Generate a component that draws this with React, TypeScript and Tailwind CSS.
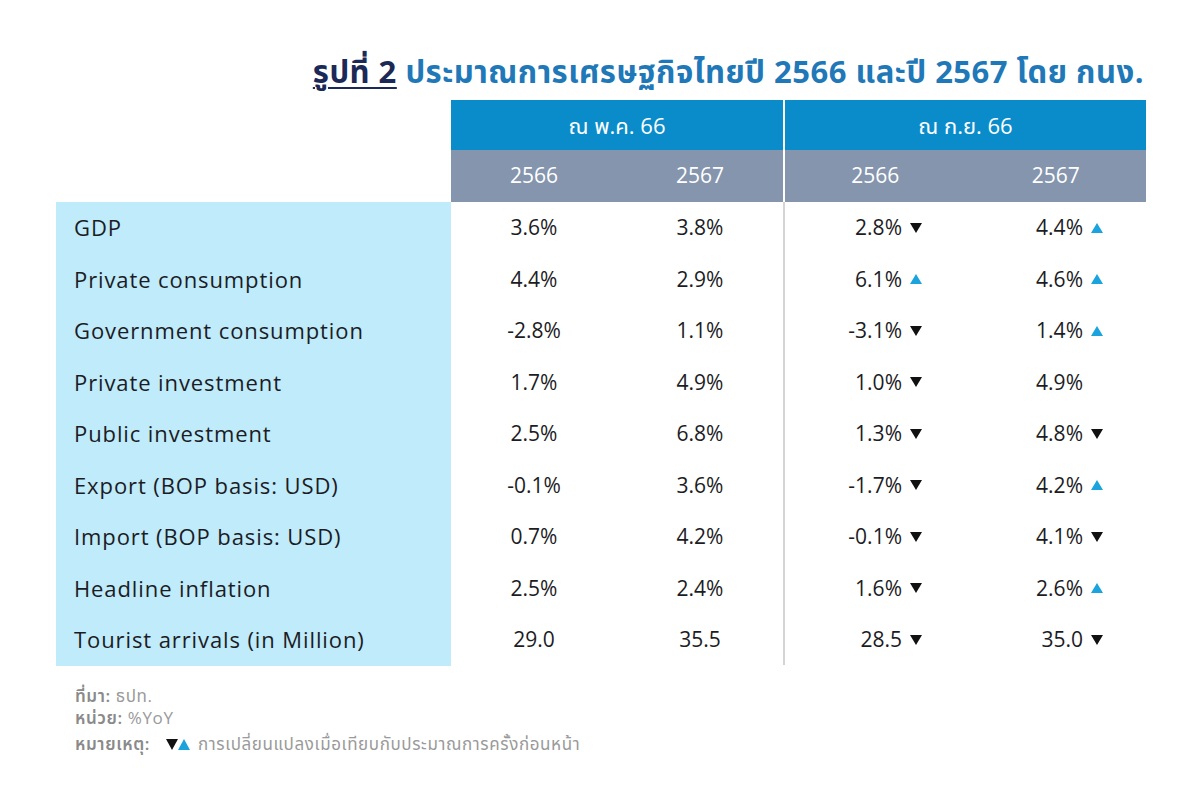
import React from "react";

type Trend = "up" | "down" | null;

interface Row {
  label: string;
  may: [string, string];
  sep: [string, Trend, string, Trend];
}

const rows: Row[] = [
  { label: "GDP", may: ["3.6%", "3.8%"], sep: ["2.8%", "down", "4.4%", "up"] },
  { label: "Private consumption", may: ["4.4%", "2.9%"], sep: ["6.1%", "up", "4.6%", "up"] },
  { label: "Government consumption", may: ["-2.8%", "1.1%"], sep: ["-3.1%", "down", "1.4%", "up"] },
  { label: "Private investment", may: ["1.7%", "4.9%"], sep: ["1.0%", "down", "4.9%", null] },
  { label: "Public investment", may: ["2.5%", "6.8%"], sep: ["1.3%", "down", "4.8%", "down"] },
  { label: "Export (BOP basis: USD)", may: ["-0.1%", "3.6%"], sep: ["-1.7%", "down", "4.2%", "up"] },
  { label: "Import (BOP basis: USD)", may: ["0.7%", "4.2%"], sep: ["-0.1%", "down", "4.1%", "down"] },
  { label: "Headline inflation", may: ["2.5%", "2.4%"], sep: ["1.6%", "down", "2.6%", "up"] },
  { label: "Tourist arrivals (in Million)", may: ["29.0", "35.5"], sep: ["28.5", "down", "35.0", "down"] },
];

const font = { fontFamily: '"Open Sans", "Noto Sans", "Noto Sans Thai", sans-serif' };

function Arrow({ trend }: { trend: Trend }) {
  if (!trend) return <span className="inline-block w-[14px]" />;
  return (
    <svg width="14" height="12" viewBox="0 0 14 12" className="inline-block">
      {trend === "up" ? (
        <polygon points="7,1 13,11 1,11" fill="#1aa3dd" />
      ) : (
        <polygon points="1,1 13,1 7,11" fill="#111111" />
      )}
    </svg>
  );
}

function SepCell({ value, trend }: { value: string; trend: Trend }) {
  return (
    <div className="flex items-center">
      <span className="w-[117px] text-right">{value}</span>
      <span className="ml-[7px] flex items-center">
        <Arrow trend={trend} />
      </span>
    </div>
  );
}

export default function App() {
  return (
    <div className="w-[1200px] h-[800px] bg-white text-[#1c1c24]" style={font}>
      <div className="flex justify-end pr-[56px] pt-[50px]">
        <h1 className="text-[31px] font-bold text-[#1f78b8] tracking-[0.5px] leading-[42px]">
          <span className="text-[#1b2957] underline decoration-2 underline-offset-4">รูปที่ 2</span>{" "}
          ประมาณการเศรษฐกิจไทยปี 2566 และปี 2567 โดย กนง.
        </h1>
      </div>

      <div className="ml-[56px] mt-[8px] flex">
        <div className="w-[395px]">
          <div className="h-[102px]" />
          <div className="bg-[#bfebfb] pl-[18px] text-[22px] tracking-[0.9px]">
            {rows.map((r) => (
              <div key={r.label} className="h-[51.5px] flex items-center">
                {r.label}
              </div>
            ))}
          </div>
        </div>

        <div className="w-[332px]">
          <div className="h-[50px] bg-[#0a8ccb] text-white text-[22px] flex items-center justify-center">
            ณ พ.ค. 66
          </div>
          <div className="h-[52px] bg-[#8595ad] text-white text-[21px] grid grid-cols-2 items-center text-center">
            <span>2566</span>
            <span>2567</span>
          </div>
          <div className="text-[21px]">
            {rows.map((r) => (
              <div key={r.label} className="h-[51.5px] grid grid-cols-2 items-center text-center">
                <span>{r.may[0]}</span>
                <span>{r.may[1]}</span>
              </div>
            ))}
          </div>
        </div>

        <div className="w-[2px] flex flex-col">
          <div className="h-[102px] bg-white" />
          <div className="h-[463px] w-[2px] bg-[#d4d4d4]" />
        </div>

        <div className="w-[361px]">
          <div className="h-[50px] bg-[#0a8ccb] text-white text-[22px] flex items-center justify-center">
            ณ ก.ย. 66
          </div>
          <div className="h-[52px] bg-[#8595ad] text-white text-[21px] grid grid-cols-2 items-center text-center">
            <span>2566</span>
            <span>2567</span>
          </div>
          <div className="text-[21px]">
            {rows.map((r) => (
              <div key={r.label} className="h-[51.5px] grid grid-cols-[181px_180px] items-center">
                <SepCell value={r.sep[0]} trend={r.sep[1]} />
                <SepCell value={r.sep[2]} trend={r.sep[3]} />
              </div>
            ))}
          </div>
        </div>
      </div>

      <div className="ml-[75px] mt-[19px] text-[17px] leading-[22px] text-[#9a9a9a] tracking-[0.6px]">
        <div>
          <span className="font-semibold text-[#8a8a8a]">ที่มา:</span> ธปท.
        </div>
        <div>
          <span className="font-semibold text-[#8a8a8a]">หน่วย:</span> %YoY
        </div>
        <div className="flex items-center mt-[4px]">
          <span className="font-semibold text-[#8a8a8a] w-[90px]">หมายเหตุ:</span>
          <svg width="26" height="14" viewBox="0 0 26 14" className="mr-[7px]">
            <polygon points="1,2 13,2 7,13" fill="#111111" />
            <polygon points="19,2 25,13 13,13" fill="#1aa3dd" />
          </svg>
          <span>การเปลี่ยนแปลงเมื่อเทียบกับประมาณการครั้งก่อนหน้า</span>
        </div>
      </div>
    </div>
  );
}
